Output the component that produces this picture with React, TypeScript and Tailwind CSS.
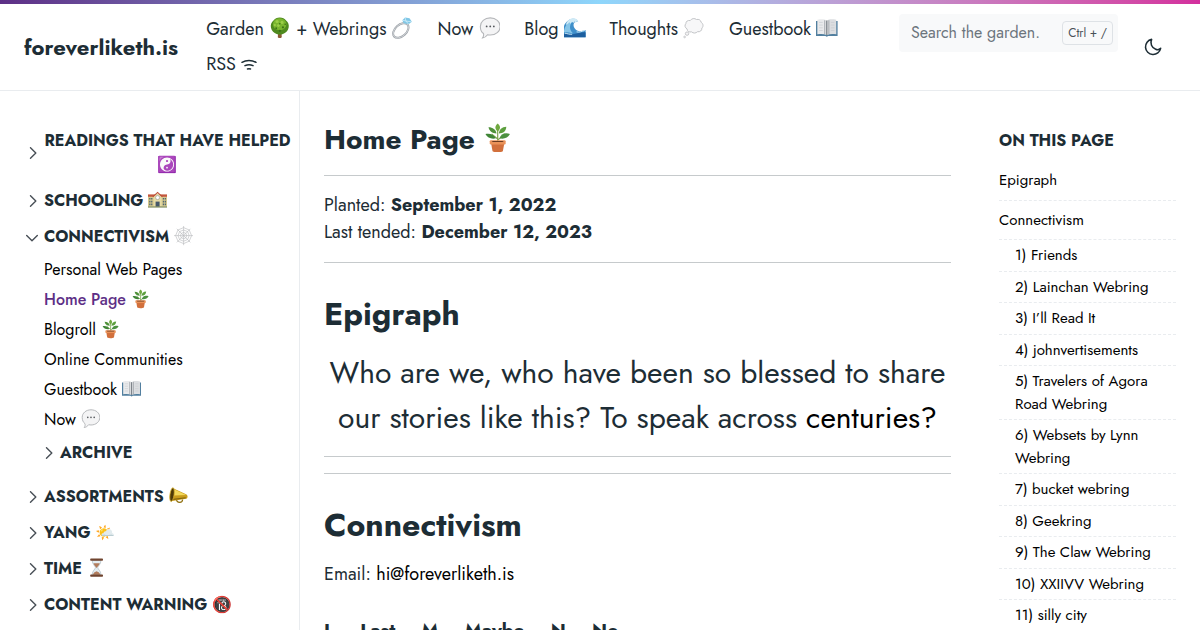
import type { ReactNode } from "react";

const box = "inline-block h-[1.2em] w-[1.2em] align-[-0.22em]";
const titleBox = "inline-block h-[1.05em] w-[1.05em] align-[-0.11em]";

function Plant({ className = box }: { className?: string }) {
  return (
    <svg viewBox="0 0 24 24" className={className} role="img" aria-label="Potted plant">
      <path d="M12 16V5M12 13L7 9M12 14l6-5" stroke="#7fa650" strokeWidth="1" fill="none" />
      <path d="M12 7C9.500 5 9.500 2.500 12 0.500c2.500 2 2.500 4.500 0 6.500z" fill="#6fa83f" />
      <path d="M11 8.500C7.500 8.500 5 6.500 4.500 3.500 8 3.500 10.500 5.500 11 8.500z" fill="#4f9139" />
      <path d="M13 8.500c0-3 2.500-5.500 6-5.500 0 3.500-2.500 5.500-6 5.500z" fill="#5c9f3e" />
      <path d="M10.500 12.500C7 13.500 3.500 12 2 9c3.500-1 7 .5 8.500 3.500z" fill="#3f8536" />
      <path d="M13.500 12.500c1-3.500 4.500-5 8.500-3.500-1.500 3-5 4.500-8.500 3.500z" fill="#4b9040" />
      <path d="M6.500 16h11l-1.300 7c-2 1.300-6.400 1.300-8.400 0z" fill="#d2703c" />
      <rect x="5.500" y="14" width="13" height="3.500" rx="1" fill="#ea9259" />
      <path d="M7 14.600h10l-1 1H8z" fill="#6b3a20" />
    </svg>
  );
}

function Tree() {
  return (
    <svg viewBox="0 0 24 24" className={box} role="img" aria-label="Tree">
      <path d="M10.300 14h3.400l.5 8.500c-1.300 1.300-3.100 1.300-4.400 0z" fill="#8a5a34" />
      <path d="M12 .5c3 0 5.500 1.300 7 3.500 2.500 1.800 3.500 5 2.800 8-.8 3.500-3.300 6-6.300 6.800-2.300.9-4.700.9-7 0C5.500 18 3 15.500 2.200 12 1.500 9 2.500 5.800 5 4c1.500-2.200 4-3.500 7-3.500z" fill="#4f8a1f" />
      <path d="M11.500 1.500c3 0 6 1.500 7.500 4.500 1 3-.5 6-3 7.500-3 1.500-7 1.300-9.500-.7C4 10.500 3.800 7 5.500 4.500c1.500-2 3.500-3 6-3z" fill="#79b52e" />
      <g fill="#9bce48">
        <circle cx="9" cy="5" r="1.800" />
        <circle cx="14.500" cy="6" r="1.700" />
        <circle cx="10.500" cy="9.500" r="1.500" />
        <circle cx="6.500" cy="9" r="1.200" />
      </g>
      <g fill="#3b7016">
        <circle cx="12" cy="7.500" r="0.900" />
        <circle cx="8" cy="12.500" r="1" />
        <circle cx="15.500" cy="11.500" r="1.200" />
        <circle cx="18" cy="8" r="0.900" />
        <circle cx="12" cy="15.500" r="1.200" />
      </g>
    </svg>
  );
}

function Ring() {
  return (
    <svg viewBox="0 0 24 24" className={box} role="img" aria-label="Ring">
      <ellipse cx="9.800" cy="15" rx="10" ry="6.300" transform="rotate(-42 9.800 15)" fill="none" stroke="#9a9fa5" strokeWidth="2.200" />
      <ellipse cx="9.800" cy="15" rx="10" ry="6.300" transform="rotate(-42 9.800 15)" fill="none" stroke="#dfe2e5" strokeWidth="0.800" />
      <path d="M11.500 3.500l3-3 5 .8 2.500 4L18.500 8 13 7z" fill="#7fc7e6" />
      <path d="M11.500 3.500l4 1 6 .8M15.500 4.500l3 3.500M14.500 .5l1 4" stroke="#e6f7ff" strokeWidth="0.700" fill="none" />
    </svg>
  );
}

function Speech() {
  return (
    <svg viewBox="0 0 24 24" className={box} role="img" aria-label="Speech bubble">
      <path d="M12.500 1c6.200 0 11 4 11 9.500s-4.800 9.500-11 9.500c-1 0-2-.1-3-.3-1.300 1.800-3.200 3.200-5.500 3.500 1-1.300 1.400-3.100 1-4.800C2.700 16.700 1.500 13.800 1.500 10.500 1.500 5 6.300 1 12.500 1z" fill="#f4f4f5" stroke="#b4b6b9" strokeWidth="1.200" />
      <circle cx="8.500" cy="10.500" r="1" fill="#55585c" />
      <circle cx="12.500" cy="10.500" r="1" fill="#55585c" />
      <circle cx="16.500" cy="10.500" r="1" fill="#55585c" />
    </svg>
  );
}

function Thought() {
  return (
    <svg viewBox="0 0 24 24" className={box} role="img" aria-label="Thought bubble">
      <path d="M8 4c1.500-2.500 5-3 7-1.200 2.500-.8 5 .8 5.200 3.200 2.300 1.200 2.800 4.500.8 6.300.2 2.700-2.200 4.700-4.800 4-1.800 2-5 2-6.700.2-2.500.8-5-.8-5-3.300C2 12 1.500 9 3.200 7.300 3 5 5.500 3.200 8 4z" fill="#f7f7f8" stroke="#c1c3c6" strokeWidth="1.100" />
      <circle cx="4.500" cy="18.500" r="1.900" fill="#f4f4f5" stroke="#bfc1c4" />
      <circle cx="1.800" cy="22.200" r="1" fill="#e5e6e7" stroke="#bfc1c4" strokeWidth="0.700" />
    </svg>
  );
}

function Wave() {
  return (
    <svg viewBox="0 0 24 24" className={box} role="img" aria-label="Wave">
      <path d="M0 22.500V10C2 5 6 2 11 2c2.500.2 4 1.500 4.500 3.500-1.500-.5-3-.3-4 .7-2 2.500-.5 7 3 8.800 3 1.500 6 .5 9.500-.5v8z" fill="#3f8fca" />
      <path d="M0 15C2 8 6 4.500 11 4 6 7 5 14 10 18c-4-.5-7-1.500-10-1z" fill="#86c5e8" />
      <path d="M2 9C3 4 7 1 11 1.300c3 .3 4.700 2.200 5 4.700l-1.700-1.200-1 1.600-1.500-1.400-1.500 1.800-1.400-1.400-1.800 2-1-1.700-2 2z" fill="#cfeaf6" />
      <path d="M0 22.500V19c4-1.500 7 1 11 0s8-2.500 13-2v5.500z" fill="#1d5f9f" />
      <path d="M1 18c3 .5 5 1.500 8 1.200M14 16.500c3 .8 6-.5 9-1.500" stroke="#d5edf8" strokeWidth="1" fill="none" />
    </svg>
  );
}

function Book() {
  return (
    <svg viewBox="0 0 24 24" className={box} role="img" aria-label="Open book">
      <path d="M0 4.500h24v16.500H13.500l-1.500 1-1.500-1H0z" fill="#527f9f" />
      <path d="M1.500 3c4.500-.8 8.500-.8 10.500 1v16c-3-1.300-6.500-1.300-10.500-.8z" fill="#e9eaec" />
      <path d="M22.500 3c-4.500-.8-8.500-.8-10.500 1v16c3-1.300 6.500-1.300 10.500-.8z" fill="#dcdee1" />
      <path d="M12 4v16" stroke="#74797f" strokeWidth="1.200" />
      <path d="M9.700 3.500v15.500M14.300 3.500v15.500" stroke="#a9adb2" strokeWidth="1.200" />
      <path d="M3.500 6h4M3.500 9h4M3.500 12h4M3.500 15h4M16.500 6h4M16.500 9h4M16.500 12h4M16.500 15h4" stroke="#c6c9cd" strokeWidth="0.700" />
    </svg>
  );
}

function Megaphone() {
  return (
    <svg viewBox="0 0 24 24" className={box} role="img" aria-label="Megaphone">
      <path d="M9 15c0 4 2 5.500 4.500 5.500S17 18.500 17 17" fill="none" stroke="#8f7010" strokeWidth="1.500" />
      <path d="M4.500 2.500L22 10.500c1.800 1.200 1.500 5-.5 5.500L2 19z" fill="#c99c1c" />
      <path d="M5 3.500l16.500 7.700L6 12z" fill="#f3d95a" />
      <path d="M3 17l18-2.300" stroke="#80640d" strokeWidth="1.500" />
      <ellipse cx="3.800" cy="10.800" rx="2.600" ry="8.700" transform="rotate(8 3.800 10.800)" fill="#4d3a08" stroke="#d8b12c" />
    </svg>
  );
}

function Web() {
  return (
    <svg viewBox="0 0 24 24" className={box} role="img" aria-label="Spider web" fill="none" stroke="#b9bbbe" strokeWidth="0.800">
      <path d="M12 0v24M0 12h24M3.500 3.500l17 17M20.500 3.500l-17 17" />
      <path d="M12 8l2.800 1.200L16 12l-1.200 2.800L12 16l-2.800-1.200L8 12l1.200-2.800zM12 5l5 2 2 5-2 5-5 2-5-2-2-5 2-5zM12 2l7 3 3 7-3 7-7 3-7-3-3-7 3-7z" />
    </svg>
  );
}

function School() {
  return (
    <svg viewBox="0 0 24 24" className={box} role="img" aria-label="School">
      <path d="M0 8h24v13H0z" fill="#d6c98d" />
      <path d="M0 5.500h24V8.500H0z" fill="#c3573c" />
      <path d="M7 8l5-4 5 4v13H7z" fill="#e6dba6" />
      <path d="M6 8.500L12 3l6 5.500" stroke="#bd4f37" strokeWidth="1.300" fill="none" />
      <circle cx="12" cy="9.500" r="2.500" fill="#fff" stroke="#8b8f93" strokeWidth="0.700" />
      <path d="M1.500 11h4M1.500 14.500h4M1.500 18h4M18.500 11h4M18.500 14.500h4M18.500 18h4" stroke="#4f6672" strokeWidth="2" strokeDasharray="1.600 0.800" />
      <path d="M9.500 14.500h5V21h-5z" fill="#45586a" />
      <path d="M0 20.500h24v1.500H0z" fill="#7d8a5c" />
    </svg>
  );
}

function Hourglass() {
  return (
    <svg viewBox="0 0 24 24" className={box} role="img" aria-label="Hourglass">
      <path d="M6.500 3h11c0 5-4 7-4 9s4 4 4 9h-11c0-5 4-7 4-9s-4-4-4-9z" fill="#e3edf2" stroke="#a9b7bf" strokeWidth="0.800" />
      <path d="M8 6.500h8c-1 3-3 4-4 6-1-2-3-3-4-6zM7.500 21c.5-3 3-4 4.500-4.500 1.500.5 4 1.500 4.500 4.500z" fill="#b27c5c" />
      <rect x="4" y="0.500" width="16" height="3" rx="1" fill="#70442f" />
      <rect x="4" y="20.500" width="16" height="3" rx="1" fill="#70442f" />
    </svg>
  );
}

function Chevron({ open = false }: { open?: boolean }) {
  return (
    <svg
      viewBox="0 0 12 12"
      className={open ? "h-3 w-3 shrink-0 rotate-90" : "h-3 w-3 shrink-0"}
      fill="none"
      stroke="#495057"
      strokeWidth="1.400"
      strokeLinecap="round"
      strokeLinejoin="round"
      aria-hidden="true"
    >
      <path d="M4.500 0.700L9.800 6 4.500 11.300" />
    </svg>
  );
}

function Section({ children, open }: { children: ReactNode; open?: boolean }) {
  return (
    <button type="button" aria-expanded={!!open} className="flex items-center gap-1.5 py-1.5 text-base leading-6 font-bold">
      <Chevron open={open} />
      <span>{children}</span>
    </button>
  );
}

const nav: ReactNode[] = [
  <>Garden <Tree /> + Webrings <Ring /></>,
  <>Now <Speech /></>,
  <>Blog <Wave /></>,
  <>Thoughts <Thought /></>,
  <>Guestbook <Book /></>,
  <>
    RSS{" "}
    <svg viewBox="0 0 16 16" className="inline-block h-4 w-4 align-[-3px]" fill="none" stroke="currentColor" strokeWidth="1.500" strokeLinecap="round" aria-hidden="true">
      <path d="M1 5.300c4-2.400 10-2.400 14 0M4 8.700c2.500-1.300 5.500-1.300 8 0M6.500 12c1-.4 2-.4 3 0" />
    </svg>
  </>,
];

const pages: ReactNode[] = [
  "Personal Web Pages",
  <>Home Page <Plant /></>,
  <>Blogroll <Plant /></>,
  "Online Communities",
  <>Guestbook <Book /></>,
  <>Now <Speech /></>,
];

const webrings = [
  "1) Friends",
  "2) Lainchan Webring",
  "3) I’ll Read It",
  "4) johnvertisements",
  "5) Travelers of Agora Road Webring",
  "6) Websets by Lynn Webring",
  "7) bucket webring",
  "8) Geekring",
  "9) The Claw Webring",
  "10) XXIIVV Webring",
  "11) silly city",
];

export default function App() {
  return (
    <div className="flex h-screen flex-col overflow-hidden bg-white font-['Jost','Lato','Noto_Color_Emoji',sans-serif] text-lg leading-[27px] text-[#1d2d35]">
      <div className="h-1 shrink-0 bg-linear-to-r from-[#5d2f86] via-[#8ed6fb] to-[#d32e9d]" />
      <header className="flex shrink-0 items-center border-b border-[#e9ecef] px-6 py-3">
        <a href="#home" className="mr-7 text-[22px] font-bold">foreverliketh.is</a>
        <nav className="flex-1">
          <ul className="flex flex-wrap gap-x-6 gap-y-2">
            {nav.map((item, i) => (
              <li key={i}><a href="#nav" className="whitespace-nowrap">{item}</a></li>
            ))}
          </ul>
        </nav>
        <form className="-mt-0.5 flex h-[38px] w-[219px] items-center self-start rounded bg-[#f8f9fa] pr-[5px] pl-3">
          <input type="search" aria-label="Search the garden" placeholder="Search the garden." className="w-0 flex-1 bg-transparent text-base text-[#1d2d35] outline-none placeholder:text-[#6c757d]" />
          <kbd className="rounded border border-[#dee2e6] px-[5px] font-['Jost','Lato',sans-serif] text-xs leading-[22px] text-[#495057]">Ctrl + /</kbd>
        </form>
        <button type="button" aria-label="Toggle dark mode" className="mr-3.5 ml-[26px]">
          <svg viewBox="0 0 20 20" className="h-[18px] w-[18px]" fill="none" stroke="currentColor" strokeWidth="1.700" strokeLinejoin="round">
            <path d="M8.500 1.500A8.500 8.500 0 1 0 18.500 11.500A5 5 0 0 1 13 12.500A8 8 0 0 1 8.500 1.500z" />
          </svg>
        </button>
      </header>
      <div className="flex min-h-0 flex-1">
        <aside className="w-[300px] shrink-0 overflow-hidden border-r border-[#e9ecef] pt-8 pr-2 pl-[26px]">
          <Section>READINGS THAT HAVE HELPED ☯️</Section>
          <Section>SCHOOLING <School /></Section>
          <Section open>CONNECTIVISM <Web /></Section>
          <ul className="pl-[18px] text-base leading-[30px] text-black">
            {pages.map((page, i) => (
              <li key={i}>
                <a href="#page" className={i === 1 ? "font-medium text-[#5d2f86]" : ""}>{page}</a>
              </li>
            ))}
          </ul>
          <div className="mb-2 pl-4"><Section>ARCHIVE</Section></div>
          <Section>ASSORTMENTS <Megaphone /></Section>
          <Section>YANG 🌤️</Section>
          <Section>TIME <Hourglass /></Section>
          <Section>CONTENT WARNING 🔞</Section>
        </aside>
        <main className="min-w-0 flex-1 overflow-hidden px-6 pt-[31px]">
          <h1 className="text-[28px] leading-9 font-bold">Home Page <Plant className={titleBox} /></h1>
          <hr className="mt-[17px] mb-4 border-[#c6cacc]" />
          <p>Planted: <strong>September 1, 2022</strong><br />Last tended: <strong>December 12, 2023</strong></p>
          <hr className="mt-4 mb-[31px] border-[#c6cacc]" />
          <h2 className="text-[32px] leading-10 font-bold">Epigraph</h2>
          <p className="mt-4 text-center text-[30px] leading-[45px]">
            Who are we, who have been so blessed to share our stories like this? To speak across <a href="#centuries" className="text-black">centuries?</a>
          </p>
          <hr className="my-4 border-[#c6cacc]" />
          <hr className="mt-4 mb-[31px] border-[#c6cacc]" />
          <h2 className="text-[32px] leading-10 font-bold">Connectivism</h2>
          <p className="mt-4">Email: <a href="mailto:hi@foreverliketh.is" className="text-black">hi@foreverliketh.is</a></p>
          <h3 className="mt-7 text-[19px] leading-[30px] font-bold whitespace-nowrap">L – Last – M – Maybe – N – No</h3>
        </main>
        <nav aria-label="On this page" className="w-[225px] shrink-0 overflow-hidden pt-[38px] pr-6 pl-6">
          <h3 className="mb-2 text-base leading-6 font-bold">ON THIS PAGE</h3>
          <ul className="text-[15px] leading-normal text-black">
            <li className="border-b border-dashed border-[#e9ecef] py-2"><a href="#epigraph">Epigraph</a></li>
            <li className="border-b border-dashed border-[#e9ecef] py-2"><a href="#connectivism">Connectivism</a></li>
            {webrings.map((ring) => (
              <li key={ring} className="border-b border-dashed border-[#e9ecef] py-1 pl-4"><a href="#ring">{ring}</a></li>
            ))}
          </ul>
        </nav>
      </div>
    </div>
  );
}
